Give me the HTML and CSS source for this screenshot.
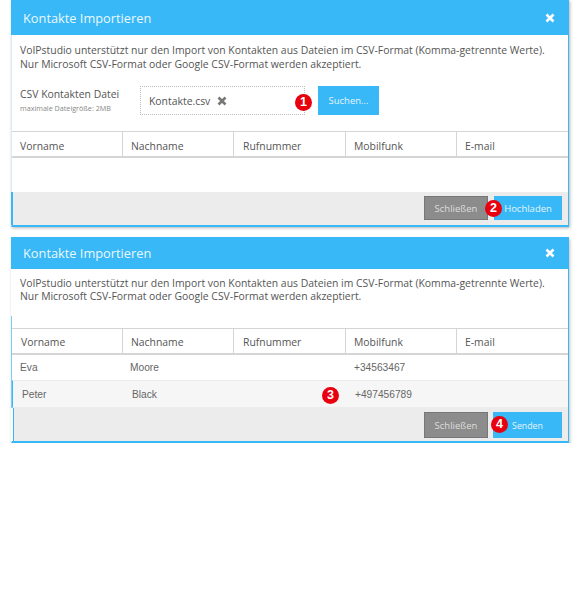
FILE: index.html
```html
<!DOCTYPE html>
<html lang="de">
<head>
<meta charset="utf-8">
<title>Kontakte Importieren</title>
<link rel="stylesheet" href="styles.css">
</head>
<body>
<section class="dialog first">
  <header class="head"><h2>Kontakte Importieren</h2><svg class="close" viewBox="0 0 10 10"><path d="M1.5 1.5l7 7M8.5 1.5l-7 7"/></svg></header>
  <p class="intro">VoIPstudio unterstützt nur den Import von Kontakten aus Dateien im CSV-Format (Komma-getrennte Werte).<br>Nur Microsoft CSV-Format oder Google CSV-Format werden akzeptiert.</p>
  <div class="file-row">
    <div class="label"><div class="label-main">CSV Kontakten Datei</div><div class="label-sub">maximale Dateigröße: 2MB</div></div>
    <div class="drop"><span>Kontakte.csv</span><svg class="remove" viewBox="0 0 10 10"><path d="M1.5 1.5l7 7M8.5 1.5l-7 7"/></svg><i class="badge b1">1</i></div>
    <button class="btn primary search">Suchen...</button>
  </div>
  <div class="cols"><div>Vorname</div><div>Nachname</div><div>Rufnummer</div><div>Mobilfunk</div><div>E-mail</div></div>
  <div class="empty"></div>
  <footer class="foot"><button class="btn grey">Schließen</button><button class="btn primary up">Hochladen</button><i class="badge b2">2</i></footer>
</section>
<section class="dialog second">
  <header class="head"><h2>Kontakte Importieren</h2><svg class="close" viewBox="0 0 10 10"><path d="M1.5 1.5l7 7M8.5 1.5l-7 7"/></svg></header>
  <p class="intro">VoIPstudio unterstützt nur den Import von Kontakten aus Dateien im CSV-Format (Komma-getrennte Werte).<br>Nur Microsoft CSV-Format oder Google CSV-Format werden akzeptiert.</p>
  <div class="cols"><div>Vorname</div><div>Nachname</div><div>Rufnummer</div><div>Mobilfunk</div><div>E-mail</div></div>
  <div class="row"><div>Eva</div><div>Moore</div><div></div><div>+34563467</div><div></div></div>
  <div class="row alt"><div>Peter</div><div>Black</div><div></div><div>+497456789</div><div></div><i class="badge b3">3</i></div>
  <footer class="foot"><button class="btn grey">Schließen</button><button class="btn primary send">Senden</button><i class="badge b4">4</i></footer>
</section>
</body>
</html>
```
FILE: styles.css
```css
* { box-sizing: border-box; }
body { margin: 0; background: #fff; font-family: "Open Sans", sans-serif; font-size: 10.4px; color: #555; }
.dialog { position: relative; width: 558px; margin-left: 11px; background: #fff; border: solid #38b8f6; border-width: 0 1px 2px 1px; box-shadow: 1px 1px 3px rgba(0,0,0,.3); }
.first { height: 227px; border-left-color: #d6eefb; }
.second { height: 206px; margin-top: 10px; margin-left: 11px; border-left-color: transparent; box-shadow: 1px 2px 3px rgba(0,0,0,.25); }
.second::before { content: ""; position: absolute; left: -1px; top: 79px; width: 1px; height: 92px; background: #7fcdf5; }
.head { display: flex; align-items: center; justify-content: space-between; background: #38b8f6; color: #eaf7fe; margin: 0 -1px; padding: 0 14px 0 12px; }
.first .head { height: 35px; }
.second .head { height: 32px; }
.head h2 { margin: 0; font-size: 12.8px; font-weight: 400; }
.close { width: 10px; height: 10px; }
.close path { stroke: #fff; stroke-width: 2.6; fill: none; }
.intro { margin: 0; padding: 8px 8px 0; line-height: 14px; height: 51px; color: #555; }
.second .intro { height: 59px; padding-top: 8px; line-height: 13px; }
.file-row { display: flex; height: 45px; padding-left: 8px; align-items: flex-start; }
.label { width: 120px; padding-top: 1px; }
.label-main { line-height: 14px; }
.label-sub { font-size: 7.2px; line-height: 10px; margin-top: 2px; color: #888; }
.drop { position: relative; display: flex; align-items: center; width: 165px; height: 29px; border: 1px dotted #bbb; padding-left: 8px; color: #555; }
.remove { width: 10px; height: 10px; margin-left: 7px; }
.remove path { stroke: #777; stroke-width: 2.6; fill: none; }
.btn { border: 0; font: inherit; font-size: 9.5px; color: #e4f5fd; padding: 0; }
.primary { background: #38b8f6; }
.grey { background: #8c8c8c; border: 1px solid #777; width: 64px; color: #ddd; }
.search { width: 61px; height: 29px; margin-left: 13px; }
.cols { display: grid; grid-template-columns: 110px 111px 112px 111px 1fr; height: 27px; border-top: 1px solid #d5d5d5; border-bottom: 2px solid #d5d5d5; }
.cols > div { padding: 7px 0 0 8px; border-left: 1px solid #d5d5d5; line-height: 15px; }
.cols > div:first-child { border-left: 0; }
.cols > div:nth-child(3) { padding-left: 9px; }
.second .cols > div { padding-top: 6px; }
.second .cols > div:first-child { padding-left: 9px; }
.empty { height: 34px; }
.foot { position: relative; display: flex; gap: 6px; justify-content: flex-end; background: #ececec; height: 33px; padding: 4px 6px 0 0; }
.foot .btn { height: 24px; }
.first .foot { margin-left: -1px; border-left: 2px solid #38b8f6; }
.second .foot { gap: 5px; margin-left: 1px; border-left: 1px solid #38b8f6; }
.second .foot .btn { height: 26px; }
.up { width: 68px; }
.btn.send { width: 69px; font-size: 8.8px; padding-top: 2px; }
.row { display: grid; grid-template-columns: 110px 111px 112px 111px 1fr; align-items: center; height: 25px; font-family: "Liberation Sans", sans-serif; font-size: 10.2px; color: #666; }
.row > div { padding-left: 8px; }
.row > div:nth-child(4) { padding-left: 9px; }
.row.alt { position: relative; height: 28px; padding-top: 1px; background: #f6f6f6; border-top: 1px solid #ececec; border-bottom: 1px solid #ececec; border-left: 1px solid #38b8f6; padding-left: 1px; }
.row.alt > div:nth-child(4) { padding-left: 8px; }
.badge { position: absolute; display: flex; align-items: center; justify-content: center; width: 17px; height: 17px; border-radius: 50%; background: #e8000f; color: #fff; font: 700 12.5px/1 "Liberation Sans", sans-serif; }
.b1 { left: 154px; top: 7px; }
.b2 { right: 66px; top: 8px; }
.b3 { left: 309px; top: 6px; }
.b4 { right: 60px; top: 8px; }
```
